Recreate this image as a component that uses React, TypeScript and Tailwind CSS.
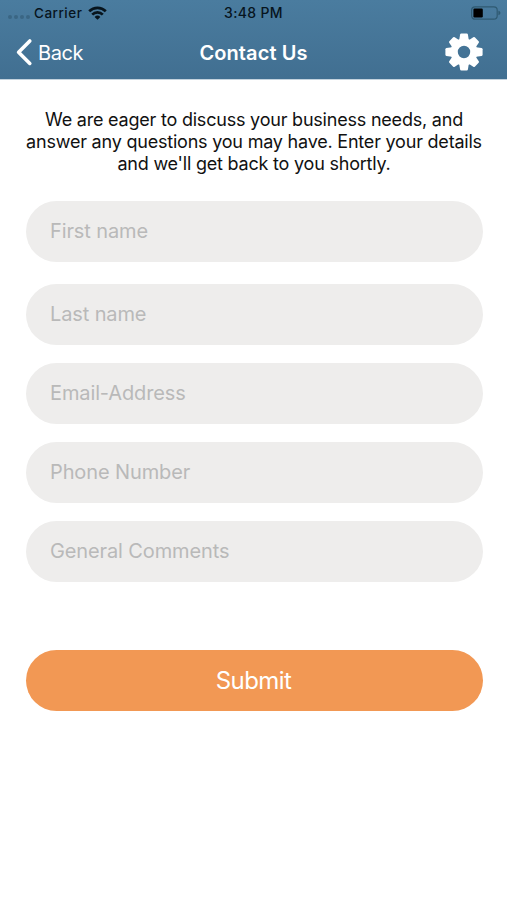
import React from "react";

const fields = [
  { label: "First name", box: "mt-[26px]" },
  { label: "Last name", box: "mt-[22px]" },
  { label: "Email-Address", box: "mt-[18px]" },
  { label: "Phone Number", box: "mt-[18px]" },
  { label: "General Comments", box: "mt-[18px]" },
];

const straightTeeth = [0, 90, 180, 270];
const diagonalTeeth = [45, 135, 225, 315];

function WifiIcon() {
  return (
    <svg width="19" height="14" viewBox="0 0 19 14" fill="none" stroke="#07141d" strokeWidth="2.7">
      <path d="M1.2 5.2a11.8 11.8 0 0 1 16.6 0" />
      <path d="M4.2 8.6a7.6 7.6 0 0 1 10.6 0" />
      <path d="M9.5 13.8 6.6 10.9a4.1 4.1 0 0 1 5.8 0Z" fill="#07141d" stroke="none" />
    </svg>
  );
}

function BatteryIcon() {
  return (
    <svg width="31" height="14" viewBox="0 0 31 14">
      <rect x="1.6" y="0.8" width="25.6" height="12.4" rx="3.4" fill="none" stroke="#2f5a72" strokeWidth="1.2" />
      <rect x="3.4" y="2.6" width="9.4" height="8.8" rx="1.2" fill="#000" />
      <path d="M28.4 4.8c1.4.4 2 1.2 2 2.2s-.6 1.8-2 2.2Z" fill="#2f5a72" />
    </svg>
  );
}

function GearIcon() {
  return (
    <svg width="38" height="38" viewBox="-19 -19 38 38">
      <g fill="#fff">
        {straightTeeth.map((a) => (
          <path key={a} transform={`rotate(${a})`} d="M-4.8 -12 -3.9 -17.6Q-3.7 -18.6 -2.7 -18.6H2.7Q3.7 -18.6 3.9 -17.6L4.8 -12Z" />
        ))}
        {diagonalTeeth.map((a) => (
          <path key={a} transform={`rotate(${a})`} d="M-4.8 -12 -3.9 -17Q-3.7 -18 -2.7 -18H2.7Q3.7 -18 3.9 -17L4.8 -12Z" />
        ))}
      </g>
      <circle r="9.8" fill="none" stroke="#fff" strokeWidth="7.2" />
    </svg>
  );
}

export default function App() {
  return (
    <div className="flex h-[900px] w-[507px] flex-col overflow-hidden bg-white font-['Inter','Liberation_Sans',sans-serif]">
      <header className="flex h-[79px] flex-col bg-linear-to-b from-[#4a7c9f] to-[#416f91] shadow-[0_1px_0_#c3d2dd]">
        <div className="grid h-[26px] grid-cols-[1fr_auto_1fr] items-center px-[6px] text-[13.5px] font-medium text-[#07141d]">
          <div className="flex items-center">
            <div className="mt-2 flex w-[28px] gap-[2px] pl-[2px]">
              <i className="size-[4px] rounded-full bg-[#3a6684]" />
              <i className="size-[4px] rounded-full bg-[#3a6684]" />
              <i className="size-[4px] rounded-full bg-[#3a6684]" />
              <i className="size-[4px] rounded-full bg-[#3a6684]" />
            </div>
            <span className="mr-[6px] tracking-[0.5px]">Carrier</span>
            <WifiIcon />
          </div>
          <span className="pb-[2px] text-center text-[14px] tracking-[0.35px]">3:48 PM</span>
          <div className="flex justify-end"><BatteryIcon /></div>
        </div>
        <div className="grid h-[52px] grid-cols-[1fr_auto_1fr] items-center px-4 text-white">
          <button className="flex items-center gap-[5px] text-left text-[20px] leading-none">
            <svg width="17" height="28" viewBox="0 0 17 28" fill="none" stroke="#fff" strokeWidth="3.6" strokeLinecap="round" strokeLinejoin="round">
              <path d="M13.8 3 2.6 14.2l11.2 11.2" />
            </svg>
            <span className="pt-px tracking-[-0.45px]">Back</span>
          </button>
          <h1 className="pt-px text-[20px] font-semibold leading-none tracking-[0.1px]">Contact Us</h1>
          <button className="flex justify-end pr-2"><GearIcon /></button>
        </div>
      </header>
      <main className="flex flex-col pl-[25.5px] pr-[24.5px]">
        <p className="mt-[30px] whitespace-nowrap text-center text-[18px] leading-[22px] tracking-[-0.21px] text-[#111]">
          <span className="block">We are eager to discuss your business needs, and</span>
          <span className="block">answer any questions you may have. Enter your details</span>
          <span className="block">and we'll get back to you shortly.</span>
        </p>
        {fields.map((f) => (
          <div key={f.label} className={`flex h-[61px] items-center rounded-full bg-[#eeedec] pb-[2px] pl-[24.5px] text-[20px] tracking-[-0.12px] text-[#b9b9b9] ${f.box}`}>
            <span>{f.label}</span>
          </div>
        ))}
        <button className="mt-[68px] h-[61px] rounded-full bg-[#f29854] pr-px pt-px text-[24px] tracking-[-0.55px] text-white">Submit</button>
      </main>
    </div>
  );
}
